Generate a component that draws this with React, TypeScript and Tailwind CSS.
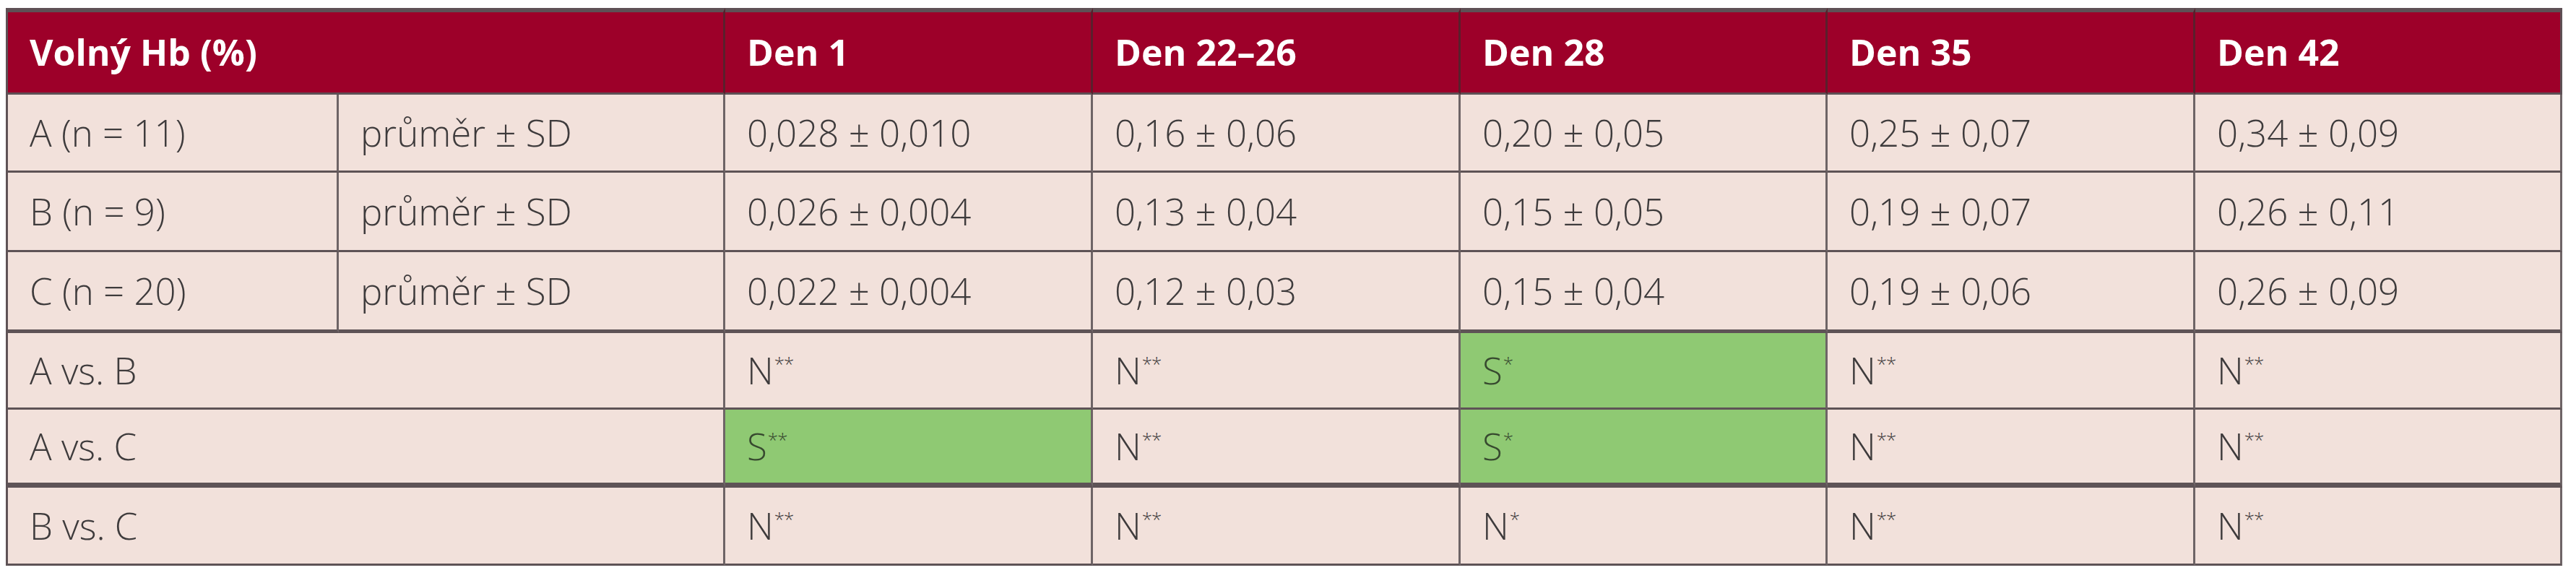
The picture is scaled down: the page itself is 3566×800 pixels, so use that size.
import React from 'react'

type Cell = { text: string; sup?: string; green?: boolean }

const days = ['Den 1', 'Den 22–26', 'Den 28', 'Den 35', 'Den 42']

const groups: { label: string; values: string[] }[] = [
  { label: 'A (n = 11)', values: ['0,028 ± 0,010', '0,16 ± 0,06', '0,20 ± 0,05', '0,25 ± 0,07', '0,34 ± 0,09'] },
  { label: 'B (n = 9)', values: ['0,026 ± 0,004', '0,13 ± 0,04', '0,15 ± 0,05', '0,19 ± 0,07', '0,26 ± 0,11'] },
  { label: 'C (n = 20)', values: ['0,022 ± 0,004', '0,12 ± 0,03', '0,15 ± 0,04', '0,19 ± 0,06', '0,26 ± 0,09'] }
]

const comparisons: { label: string; cells: Cell[] }[] = [
  {
    label: 'A vs. B',
    cells: [
      { text: 'N', sup: '**' },
      { text: 'N', sup: '**' },
      { text: 'S', sup: '*', green: true },
      { text: 'N', sup: '**' },
      { text: 'N', sup: '**' }
    ]
  },
  {
    label: 'A vs. C',
    cells: [
      { text: 'S', sup: '**', green: true },
      { text: 'N', sup: '**' },
      { text: 'S', sup: '*', green: true },
      { text: 'N', sup: '**' },
      { text: 'N', sup: '**' }
    ]
  },
  {
    label: 'B vs. C',
    cells: [
      { text: 'N', sup: '**' },
      { text: 'N', sup: '**' },
      { text: 'N', sup: '*' },
      { text: 'N', sup: '**' },
      { text: 'N', sup: '**' }
    ]
  }
]

const styles = {
  th: 'h-[120px] border-t-[6px] border-t-[#5e5055] border-b-[3px] border-b-[#5e5055] border-r-[3px] border-r-[#5a1f2c] bg-[#9d0029] pl-[30px] text-left align-middle font-bold text-[50px] text-white',
  td: 'border-b-[3px] border-b-[#5e5356] border-r-[3px] border-r-[#6e6466] pl-[30px] text-left align-middle font-light text-[51px] text-[#3e3b3c]',
  beige: 'bg-[#f2e1db]',
  green: 'bg-[#8fc973] text-[#37492f]',
  first: 'border-l-[3px] border-l-[#5e5356]',
  sup: 'ml-[1px] text-[26px] top-[-0.75em] tracking-[-1px]'
}

const bottomBorders = ['h-[108px]', 'h-[110px]', 'h-[112px] border-b-[5px]']
const compHeights = ['h-[106px]', 'h-[108px] border-b-[7px]', 'h-[108px]']

export default function App() {
  return (
    <div className="min-h-[800px] w-[3566px] bg-white pl-[8px] pt-[11px] font-['Open_Sans',sans-serif]">
      <table className="w-[3539px] table-fixed border-separate border-spacing-0">
        <colgroup>
          <col className="w-[461px]" />
          <col className="w-[535px]" />
          <col className="w-[509px]" />
          <col className="w-[509px]" />
          <col className="w-[508px]" />
          <col className="w-[509px]" />
          <col className="w-[508px]" />
        </colgroup>
        <thead>
          <tr>
            <th colSpan={2} className={`${styles.th} border-l-[3px] border-l-[#5e5055]`}>
              Volný Hb (%)
            </th>
            {days.map((d, i) => (
              <th key={d} className={`${styles.th} ${i === days.length - 1 ? 'border-r-[#5e5055]' : ''}`}>
                {d}
              </th>
            ))}
          </tr>
        </thead>
        <tbody>
          {groups.map((g, r) => (
            <tr key={g.label}>
              <td className={`${styles.td} ${styles.beige} ${styles.first} ${bottomBorders[r]}`}>{g.label}</td>
              <td className={`${styles.td} ${styles.beige} ${bottomBorders[r]}`}>průměr ± SD</td>
              {g.values.map((v, i) => (
                <td key={i} className={`${styles.td} ${styles.beige} ${bottomBorders[r]}`}>
                  {v}
                </td>
              ))}
            </tr>
          ))}
          {comparisons.map((c, r) => (
            <tr key={c.label}>
              <td colSpan={2} className={`${styles.td} ${styles.beige} ${styles.first} ${compHeights[r]}`}>
                {c.label}
              </td>
              {c.cells.map((cell, i) => (
                <td
                  key={i}
                  className={`${styles.td} ${cell.green ? styles.green : styles.beige} ${compHeights[r]} ${
                    cell.green ? 'border-b-[#4b5a45] border-r-[#4b5a45]' : ''
                  }`}
                >
                  {cell.text}
                  <sup className={styles.sup}>{cell.sup}</sup>
                </td>
              ))}
            </tr>
          ))}
        </tbody>
      </table>
    </div>
  )
}
